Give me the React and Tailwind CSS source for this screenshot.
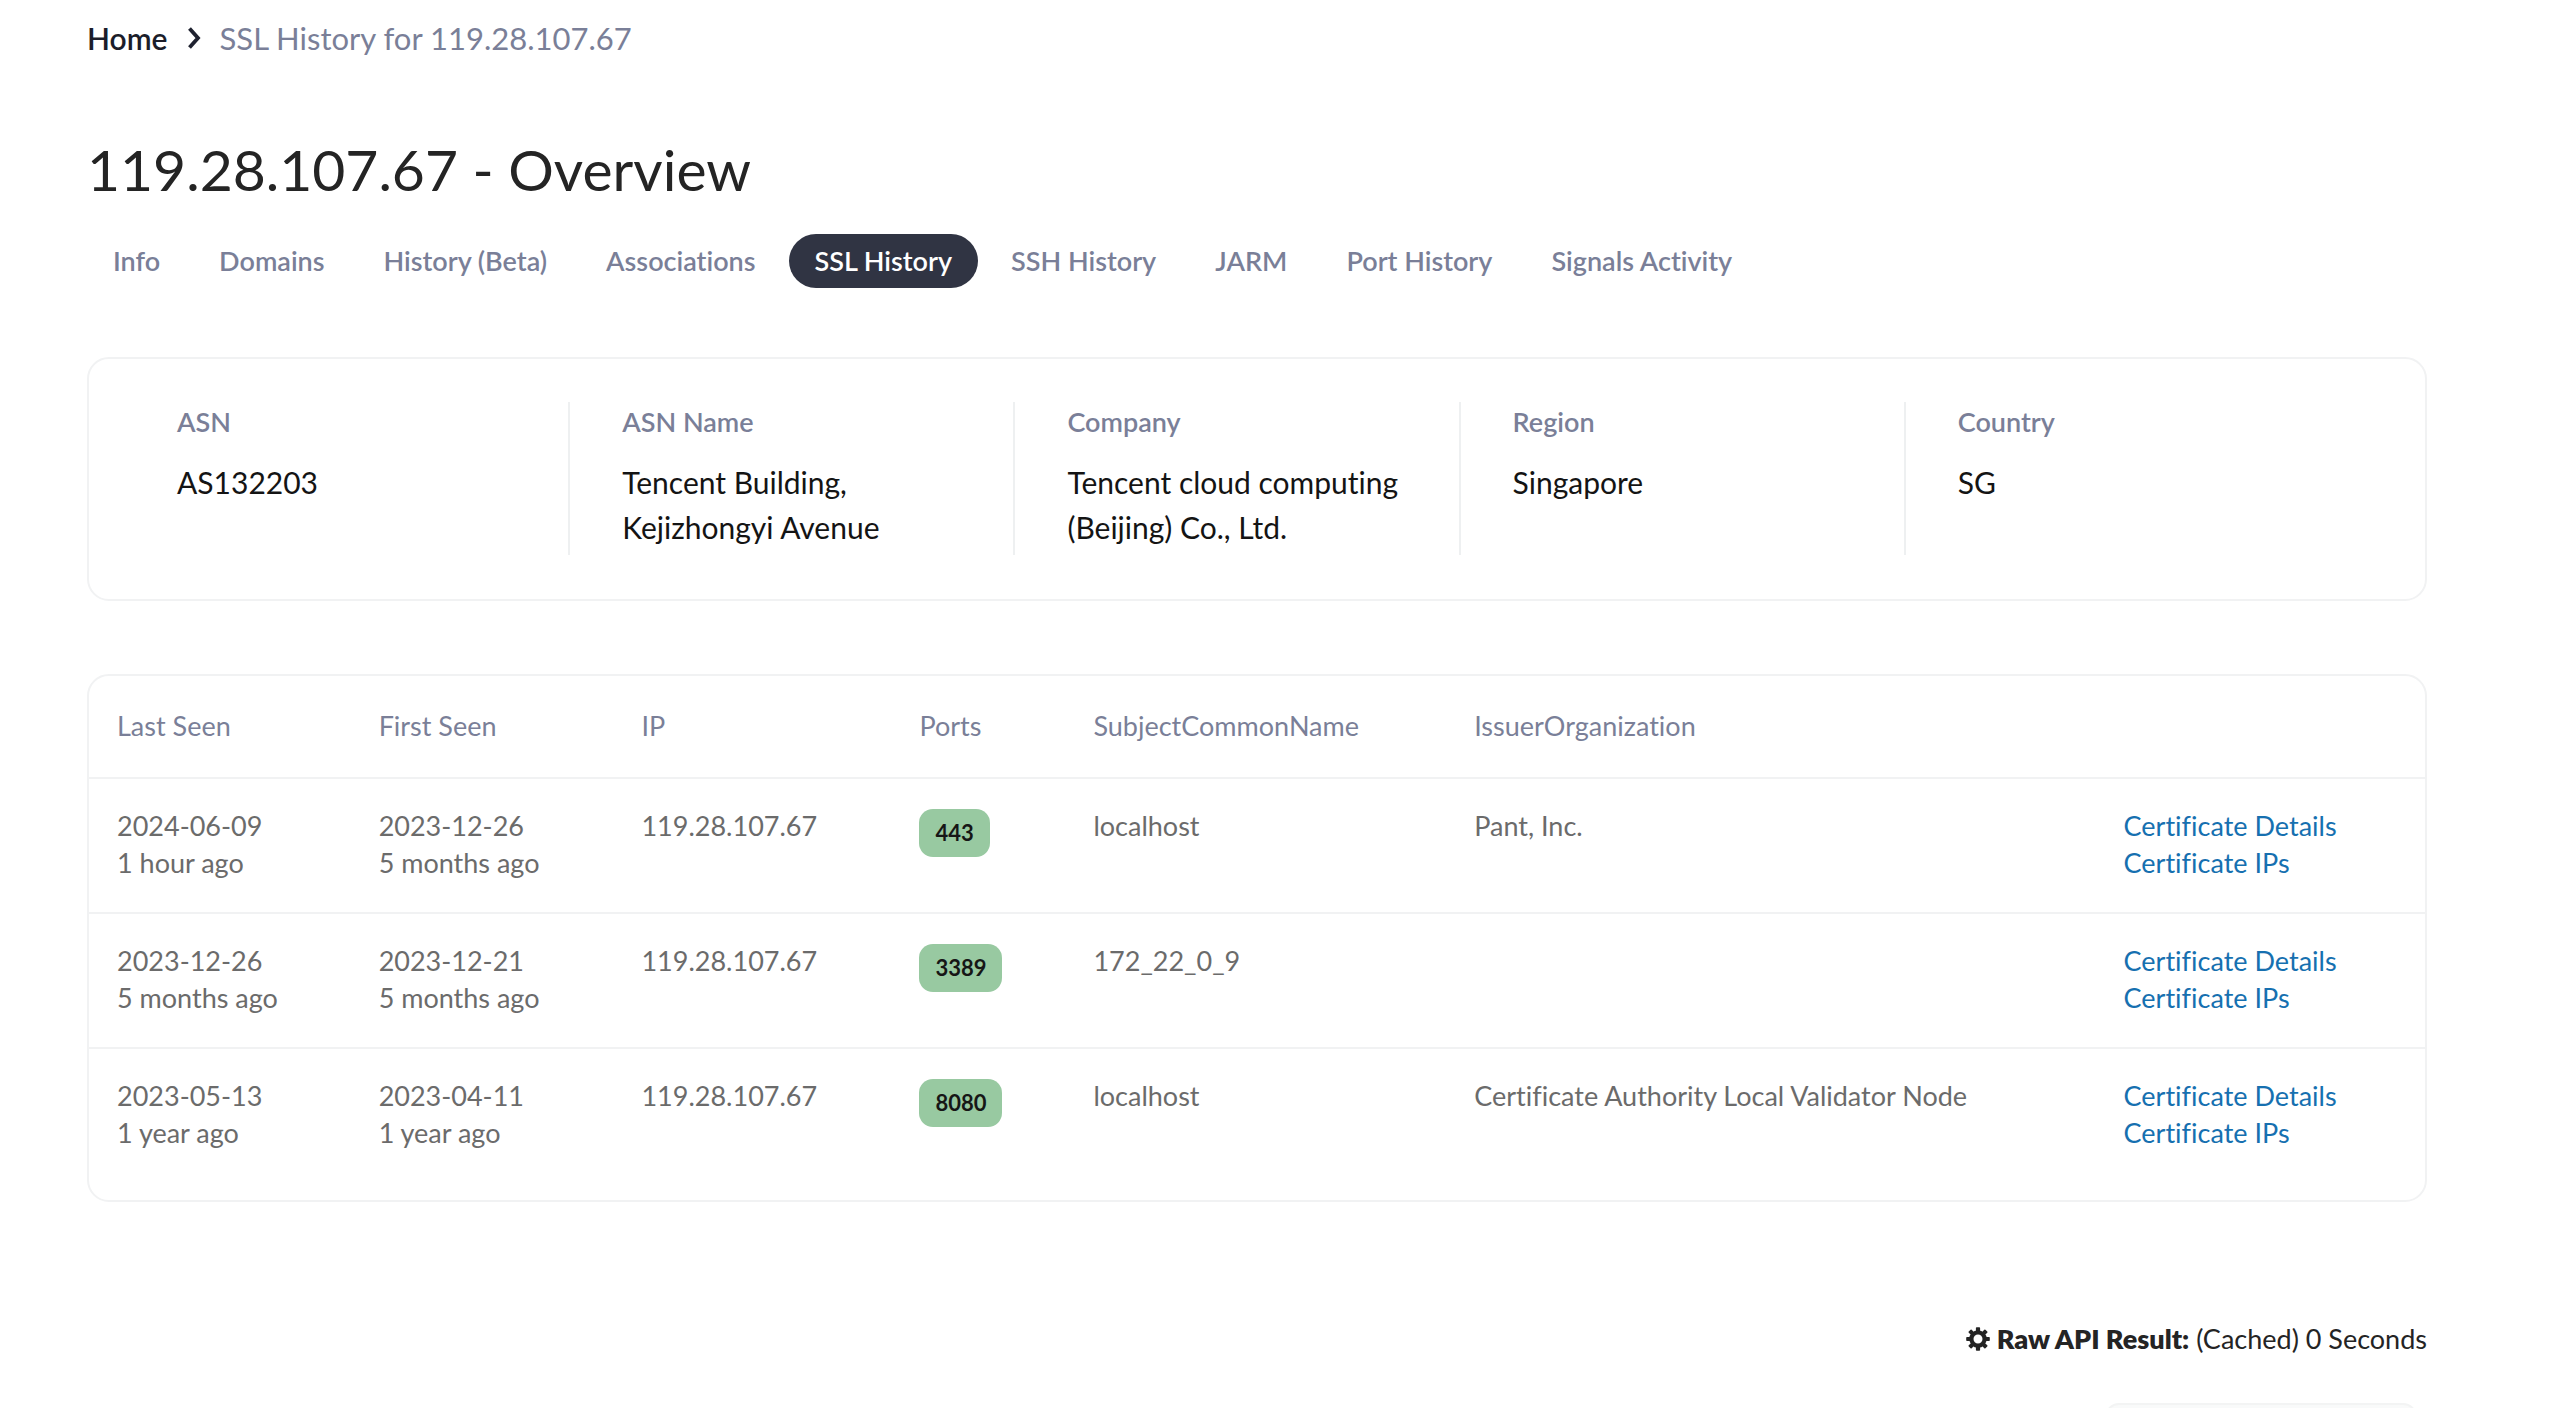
import React from 'react';

const TABS = [
  { label: 'Info' },
  { label: 'Domains' },
  { label: 'History (Beta)' },
  { label: 'Associations' },
  { label: 'SSL History', active: true },
  { label: 'SSH History' },
  { label: 'JARM' },
  { label: 'Port History' },
  { label: 'Signals Activity' },
];

const SUMMARY = [
  { label: 'ASN', value: 'AS132203' },
  { label: 'ASN Name', value: 'Tencent Building, Kejizhongyi Avenue' },
  { label: 'Company', value: 'Tencent cloud computing (Beijing) Co., Ltd.' },
  { label: 'Region', value: 'Singapore' },
  { label: 'Country', value: 'SG' },
];

const COLUMNS = [
  { label: 'Last Seen', width: 'w-[11.2%]' },
  { label: 'First Seen', width: 'w-[11.25%]' },
  { label: 'IP', width: 'w-[11.9%]' },
  { label: 'Ports', width: 'w-[7.45%]' },
  { label: 'SubjectCommonName', width: 'w-[16.3%]' },
  { label: 'IssuerOrganization', width: 'w-[27.8%]' },
];

const CERTS = [
  {
    lastSeen: ['2024-06-09', '1 hour ago'],
    firstSeen: ['2023-12-26', '5 months ago'],
    ip: '119.28.107.67',
    port: 443,
    subject: 'localhost',
    issuer: 'Pant, Inc.',
  },
  {
    lastSeen: ['2023-12-26', '5 months ago'],
    firstSeen: ['2023-12-21', '5 months ago'],
    ip: '119.28.107.67',
    port: 3389,
    subject: '172_22_0_9',
    issuer: '',
  },
  {
    lastSeen: ['2023-05-13', '1 year ago'],
    firstSeen: ['2023-04-11', '1 year ago'],
    ip: '119.28.107.67',
    port: 8080,
    subject: 'localhost',
    issuer: 'Certificate Authority Local Validator Node',
  },
];

function GearIcon() {
  return (
    <svg viewBox="0 0 24 24" className="w-6 h-6" aria-hidden="true">
      <circle cx="12" cy="12" r="6.6" fill="none" stroke="currentColor" strokeWidth="4.2" />
      {[0, 45, 90, 135, 180, 225, 270, 315].map((angle) => (
        <rect key={angle} x="9.9" y="0.2" width="4.2" height="5" rx="0.8" fill="currentColor" transform={`rotate(${angle} 12 12)`} />
      ))}
    </svg>
  );
}

function Breadcrumb() {
  return (
    <nav aria-label="Breadcrumb" className="flex items-center text-[31px] leading-10">
      <a href="#home" className="text-[30px] font-semibold text-[#1b1d2a]">Home</a>
      <svg viewBox="0 0 14 22" className="w-[14px] h-[22px] mx-[19px]" aria-hidden="true">
        <path d="M2.5 1.5 L11 11 L2.5 20.5" fill="none" stroke="#1f2230" strokeWidth="3.8" />
      </svg>
      <span className="text-[#7a7f98]">SSL History for 119.28.107.67</span>
    </nav>
  );
}

function DateCell({ lines }) {
  return (
    <td className="px-7 pt-7 pb-[31px]">
      {lines[0]}
      <br />
      {lines[1]}
    </td>
  );
}

function CertTable() {
  return (
    <section className="mt-[73px] pb-[18px] border-2 border-[#f1f2f3] rounded-[22px]">
      <table className="w-full table-fixed text-left text-[27px] leading-[37px] text-[#6b6b6b]">
        <thead>
          <tr className="border-b-2 border-[#f1f2f3] text-[#7a7f98]">
            {COLUMNS.map((col) => (
              <th key={col.label} scope="col" className={`px-7 pt-[31px] pb-[33px] font-normal ${col.width}`}>{col.label}</th>
            ))}
            <th scope="col" aria-label="Links" />
          </tr>
        </thead>
        <tbody>
          {CERTS.map((cert) => (
            <tr key={cert.port} className="align-top border-b-2 border-[#f1f2f3] last:border-b-0">
              <DateCell lines={cert.lastSeen} />
              <DateCell lines={cert.firstSeen} />
              <td className="px-7 pt-7 pb-[31px]">{cert.ip}</td>
              <td className="px-7 pt-[30px]">
                <span className="inline-block h-12 px-4 rounded-[14px] bg-[#98c9a1] text-[22px] leading-[48px] font-bold text-[#161616]">
                  {cert.port}
                </span>
              </td>
              <td className="px-7 pt-7 pb-[31px]">{cert.subject}</td>
              <td className="px-7 pt-7 pb-[31px]">{cert.issuer}</td>
              <td className="px-7 pt-7 pb-[31px] text-[#1670b0]">
                <a href="#details">Certificate Details</a>
                <br />
                <a href="#ips">Certificate IPs</a>
              </td>
            </tr>
          ))}
        </tbody>
      </table>
    </section>
  );
}

export default function App() {
  return (
    <div className="h-screen overflow-hidden bg-white pt-[18px] pl-[87px] pr-[133px] font-[Lato,'Noto_Sans',sans-serif] text-[#242424] [font-variant-ligatures:none]">
      <Breadcrumb />

      <h1 className="mt-[75px] text-[57px] leading-[72px]">119.28.107.67 - Overview</h1>

      <nav className="mt-[29px] flex gap-[7px]">
        {TABS.map((tab) => (
          <a
            key={tab.label}
            href="#tab"
            aria-current={tab.active ? 'page' : undefined}
            className={`px-[26px] rounded-full text-[27px] leading-[54px] font-semibold ${tab.active ? 'bg-[#303443] text-white' : 'text-[#7a7f98]'}`}
          >
            {tab.label}
          </a>
        ))}
      </nav>

      <section className="mt-[69px] pt-[43px] pb-11 pl-9 pr-[74px] border-2 border-[#f1f2f3] rounded-[22px]">
        <dl className="grid grid-cols-5">
          {SUMMARY.map((item) => (
            <div key={item.label} className="pl-[52px] pr-10 pb-[5px] border-r-2 border-[#eef0f1] last:border-r-0">
              <dt className="text-[27px] leading-[40px] font-semibold text-[#7a7f98]">{item.label}</dt>
              <dd className="mt-[18px] text-[30px] leading-[45px] text-[#141414]">{item.value}</dd>
            </div>
          ))}
        </dl>
      </section>

      <CertTable />

      <footer className="mt-[117px] flex flex-col items-end">
        <p className="flex items-center gap-[7px] text-[27px] leading-10">
          <GearIcon />
          <strong className="font-extrabold">Raw API Result:</strong>
          <span>(Cached) 0 Seconds</span>
        </p>
        <div className="mt-11 mr-[10px] w-[312px] h-16 rounded-[14px] border-2 border-[#f3f4f4] bg-[#f9fafa]" />
      </footer>
    </div>
  );
}
